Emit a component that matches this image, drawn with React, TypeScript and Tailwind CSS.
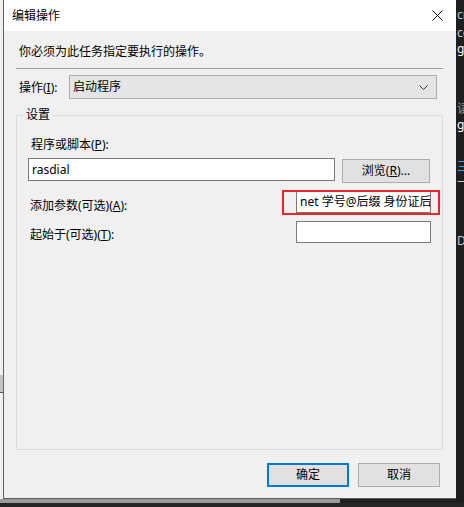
import React from "react";

const font = { fontFamily: '"Noto Sans", "Noto Sans CJK SC", sans-serif' };

const Field: React.FC<{ value?: string; className?: string }> = ({ value, className }) => (
  <div
    className={`h-[22px] w-[135px] overflow-hidden whitespace-nowrap border border-[#7a7a7a] bg-white pl-[3px] text-[12px] leading-[20px] text-black ${className ?? ""}`}
  >
    {value}
  </div>
);

const SideText: React.FC<{ text: string; color: string; top: string }> = ({ text, color, top }) => (
  <div className={`${top} whitespace-nowrap pl-[1px] text-[12px] leading-[14px]`} style={{ color }}>
    {text}
  </div>
);

export default function App() {
  return (
    <div className="flex h-[507px] w-[464px] flex-col overflow-hidden bg-[#1e1e1e] text-[12px] text-black" style={font}>
      <div className="flex h-[499px]">
        {/* window behind, on the left */}
        <div className="flex w-[3px] flex-col bg-[#f0f0f0]">
          <div className="h-[375px]" />
          <div className="h-[17px] bg-[#c2c2c2]" />
          <div className="h-px bg-[#555]" />
        </div>

        {/* dialog */}
        <div className="flex w-[453px] flex-col border-b border-l border-[#5f5f5f] bg-[#f0f0f0]">
          <div className="flex h-[31px] items-center justify-between bg-white pl-[8px] pr-[13px]">
            <span className="leading-[16px]">编辑操作</span>
            <svg width="11" height="11" viewBox="0 0 11 11" fill="none" stroke="#111" strokeWidth="1">
              <path d="M0.5 0.5 10.5 10.5M10.5 0.5 0.5 10.5" />
            </svg>
          </div>

          <div className="flex flex-col">
            <div className="mt-[13px] pl-[15px] leading-[16px]">你必须为此任务指定要执行的操作。</div>
            <div className="ml-[12px] mt-[8px] h-px w-[427px] bg-[#a0a0a0]" />

            <div className="mt-[6px] flex items-center pl-[15px]">
              <span className="w-[50px] pt-[2px] leading-[16px]">
                操作(<u>I</u>):
              </span>
              <div className="flex h-[24px] w-[368px] items-center justify-between border border-[#adadad] bg-[#e5e5e5] pl-[3px] pr-[8px]">
                <span className="leading-[16px]">启动程序</span>
                <svg width="9" height="5" viewBox="0 0 9 5" fill="none" stroke="#333" strokeWidth="1">
                  <path d="M0.5 0.5 4.5 4.5 8.5 0.5" />
                </svg>
              </div>
            </div>

            {/* settings group */}
            <div className="relative ml-[12px] mt-[16px] flex h-[335px] w-[427px] flex-col border border-[#dcdcdc]">
              <span className="absolute left-[7px] top-[-9px] bg-[#f0f0f0] px-[2px] leading-[16px]">设置</span>

              <div className="mt-[21px] pl-[14px] leading-[16px]">
                程序或脚本(<u>P</u>):
              </div>
              <div className="mt-[5px] flex items-start pl-[11px]">
                <div className="h-[23px] w-[307px] border border-[#7a7a7a] bg-white pl-[3px] text-[12px] leading-[21px]">
                  rasdial
                </div>
                <div className="ml-[7px] mt-px flex h-[24px] w-[88px] items-center justify-center border border-[#adadad] bg-[#e1e1e1] leading-[16px]">
                  浏览(<u>R</u>)...
                </div>
              </div>

              <div className="mt-[8px] flex items-start justify-between pl-[13px] pr-[11px]">
                <span className="pt-[7px] leading-[16px]">
                  添加参数(可选)(<u>A</u>):
                </span>
                <div className="relative">
                  <Field value="net 学号@后缀 身份证后" />
                  <div className="absolute left-[-14px] top-[-1px] h-[25px] w-[158px] border-2 border-[#e8252d]" />
                </div>
              </div>

              <div className="mt-[7px] flex items-start justify-between pl-[13px] pr-[11px]">
                <span className="pt-[6px] leading-[16px]">
                  起始于(可选)(<u>T</u>):
                </span>
                <Field />
              </div>
            </div>

            <div className="mt-[13px] flex justify-end gap-[9px] pr-[16px]">
              <div className="flex h-[24px] w-[82px] items-center justify-center border-2 border-[#0078d7] bg-[#e1e1e1] leading-[16px]">
                确定
              </div>
              <div className="flex h-[24px] w-[82px] items-center justify-center border border-[#adadad] bg-[#e1e1e1] leading-[16px]">
                取消
              </div>
            </div>
          </div>
        </div>

        {/* editor behind, on the right */}
        <div className="flex w-[8px] flex-col overflow-hidden bg-[#1f1f1f]">
          <SideText text="cr" color="#c8c8c8" top="mt-[8px]" />
          <SideText text="ce" color="#c8c8c8" top="mt-[4px]" />
          <SideText text="ge" color="#ffffff" top="mt-[2px]" />
          <SideText text="读" color="#9c9c9c" top="mt-[46px]" />
          <SideText text="ge" color="#ffffff" top="mt-[2px]" />
          <SideText text="三" color="#4a9ee0" top="mt-[28px]" />
          <SideText text="一方" color="#c8c8c8" top="mt-[2px]" />
          <SideText text="DI" color="#c8c8c8" top="mt-[44px]" />
        </div>
      </div>
      <div className="flex h-[8px] flex-col">
        <div className="h-[4px] w-[340px] bg-[#9a9a9a]" />
        <div className="h-[4px] bg-[#262626]" />
      </div>
    </div>
  );
}
